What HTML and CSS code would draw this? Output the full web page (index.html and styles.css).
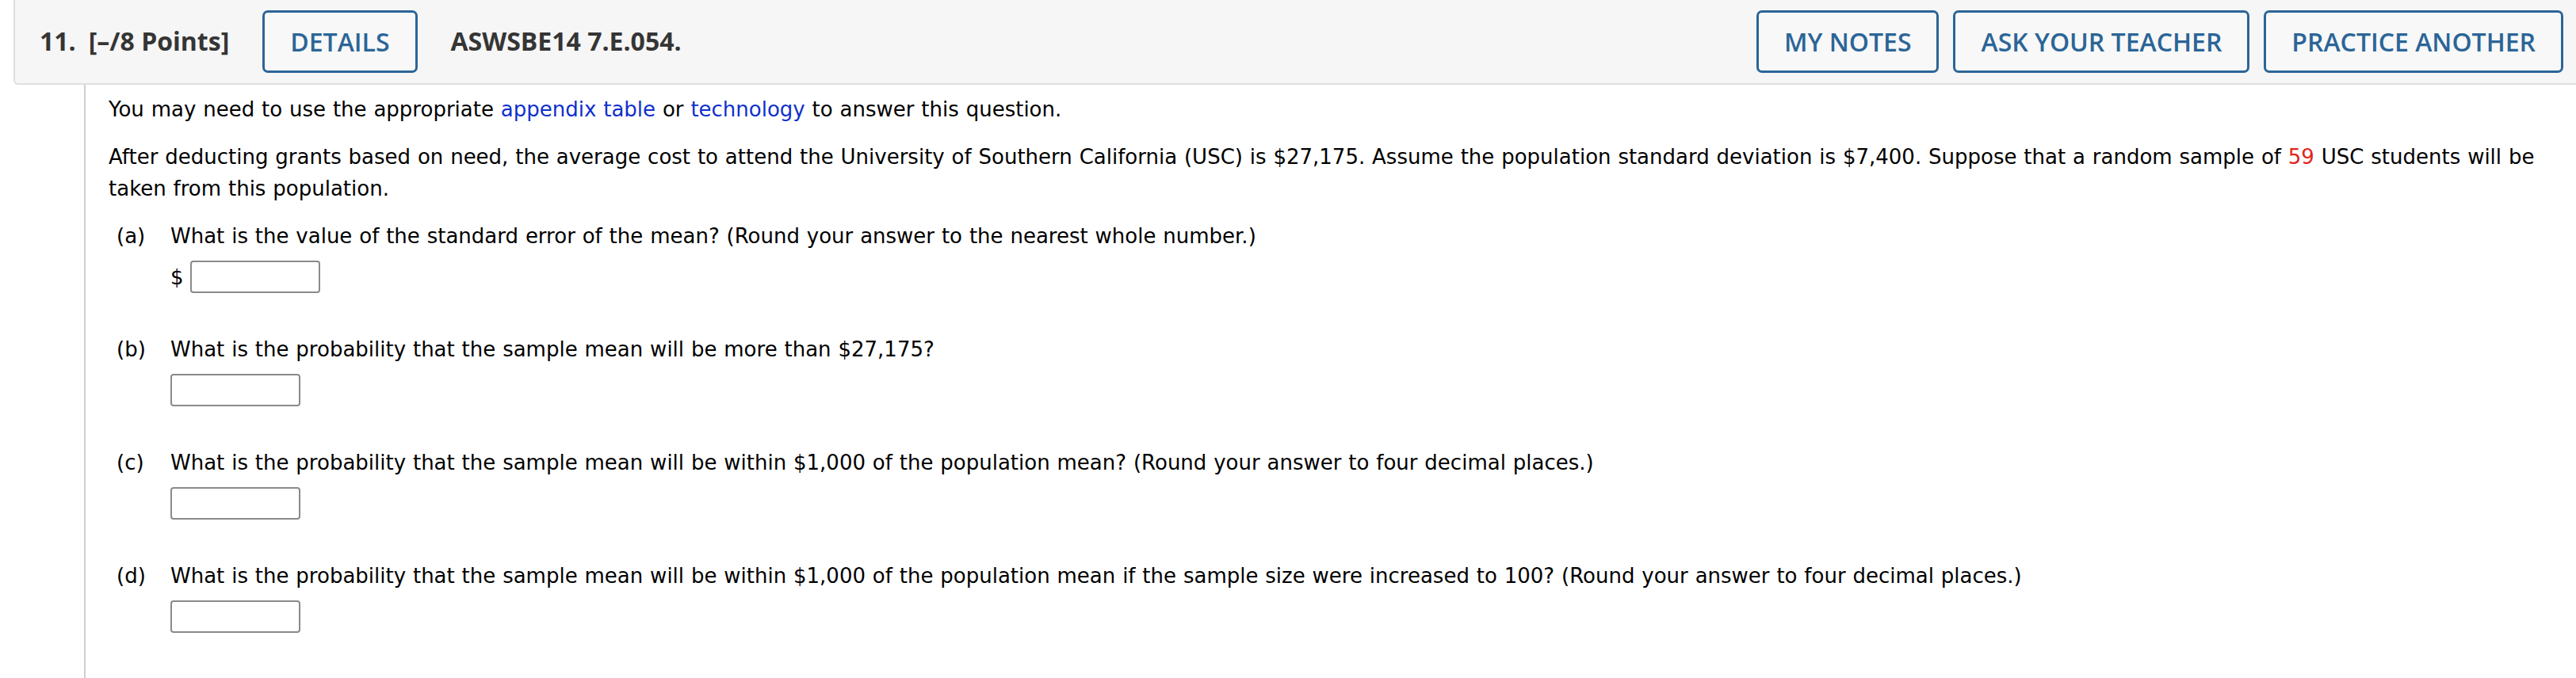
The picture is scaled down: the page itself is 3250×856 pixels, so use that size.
FILE: index.html
```html
<!DOCTYPE html>
<html lang="en">
<head>
<meta charset="utf-8">
<title>ASWSBE14 7.E.054.</title>
<link rel="stylesheet" href="styles.css">
</head>
<body>
<div class="question">
  <div class="qhead">
    <span class="qnum">11.</span>
    <span class="qpoints">[–/8 Points]</span>
    <button class="qbtn details">DETAILS</button>
    <span class="qcode">ASWSBE14 7.E.054.</span>
    <div class="qactions">
      <button class="qbtn">MY NOTES</button>
      <button class="qbtn">ASK YOUR TEACHER</button>
      <button class="qbtn">PRACTICE ANOTHER</button>
    </div>
  </div>
  <div class="qbody">
    <p class="intro">You may need to use the appropriate <a href="#" class="link">appendix table</a> or <a href="#" class="link">technology</a> to answer this question.</p>
    <p class="stem">After deducting grants based on need, the average cost to attend the University of Southern California (USC) is $27,175. Assume the population standard deviation is $7,400. Suppose that a random sample of <span class="rand">59</span> USC students will be taken from this population.</p>
    <div class="parts">
      <div class="part">
        <span class="plabel">(a)</span>
        <div class="pbody">
          <div class="ptext">What is the value of the standard error of the mean? (Round your answer to the nearest whole number.)</div>
          <div class="answer"><span class="unit">$</span><input class="box" type="text"></div>
        </div>
      </div>
      <div class="part">
        <span class="plabel">(b)</span>
        <div class="pbody">
          <div class="ptext">What is the probability that the sample mean will be more than $27,175?</div>
          <div class="answer"><input class="box" type="text"></div>
        </div>
      </div>
      <div class="part">
        <span class="plabel">(c)</span>
        <div class="pbody">
          <div class="ptext">What is the probability that the sample mean will be within $1,000 of the population mean? (Round your answer to four decimal places.)</div>
          <div class="answer"><input class="box" type="text"></div>
        </div>
      </div>
      <div class="part">
        <span class="plabel">(d)</span>
        <div class="pbody">
          <div class="ptext">What is the probability that the sample mean will be within $1,000 of the population mean if the sample size were increased to 100? (Round your answer to four decimal places.)</div>
          <div class="answer"><input class="box" type="text"></div>
        </div>
      </div>
    </div>
  </div>
</div>
</body>
</html>
```
FILE: styles.css
```css
html, body {
  margin: 0;
  padding: 0;
  background: #ffffff;
}

body {
  font-family: "DejaVu Sans", Verdana, sans-serif;
  font-size: 26px;
  color: #000;
  width: 3250px;
  height: 856px;
  overflow: hidden;
}

.qhead {
  margin-left: 17px;
  height: 105px;
  box-sizing: content-box;
  background: #f6f6f6;
  border-left: 2px solid #dedede;
  border-bottom: 2px solid #dedede;
  border-bottom-left-radius: 6px;
  display: flex;
  align-items: center;
  padding-left: 31px;
  padding-right: 16px;
  font-family: "Open Sans", sans-serif;
  color: #353535;
  line-height: 1.2;
}

.qnum {
  font-weight: 700;
  font-size: 32px;
}

.qpoints {
  font-weight: 700;
  font-size: 32px;
  margin-left: 16px;
}

.qcode {
  font-weight: 700;
  font-size: 32px;
  margin-left: 42px;
}

.qbtn {
  font-family: "Open Sans", sans-serif;
  font-weight: 600;
  font-size: 32px;
  line-height: 1;
  color: #2b6597;
  background: #f8f8f8;
  border: 3px solid #2b6597;
  border-radius: 7px;
  height: 79px;
  padding: 0 32px;
  margin: 0;
  cursor: pointer;
}

.details {
  margin-left: 42px;
}

.qactions {
  margin-left: auto;
  display: flex;
  gap: 18px;
}

.qbody {
  margin-left: 106px;
  border-left: 2px solid #cfcfcf;
  padding-left: 29px;
  padding-top: 11px;
  padding-right: 30px;
  height: 760px;
  line-height: 40px;
  word-spacing: 0.6px;
}

.qbody p {
  margin: 0;
}

.stem {
  margin-top: 20px !important;
}

.link {
  color: #1030cc;
  text-decoration: none;
}

.rand {
  color: #e5231c;
}

.parts {
  margin-top: 20px;
}

.part {
  display: flex;
  padding-left: 10px;
  height: 143px;
}

.plabel {
  width: 68px;
  flex: none;
}

.pbody {
  display: flex;
  flex-direction: column;
}

.answer {
  margin-top: 11px;
  display: flex;
  align-items: center;
  height: 41px;
}

.unit {
  margin-right: 8px;
}

.box {
  width: 164px;
  height: 41px;
  box-sizing: border-box;
  border: 2px solid #8a8a8a;
  border-radius: 4px;
  background: #fff;
  margin: 0;
  padding: 0;
}
```
